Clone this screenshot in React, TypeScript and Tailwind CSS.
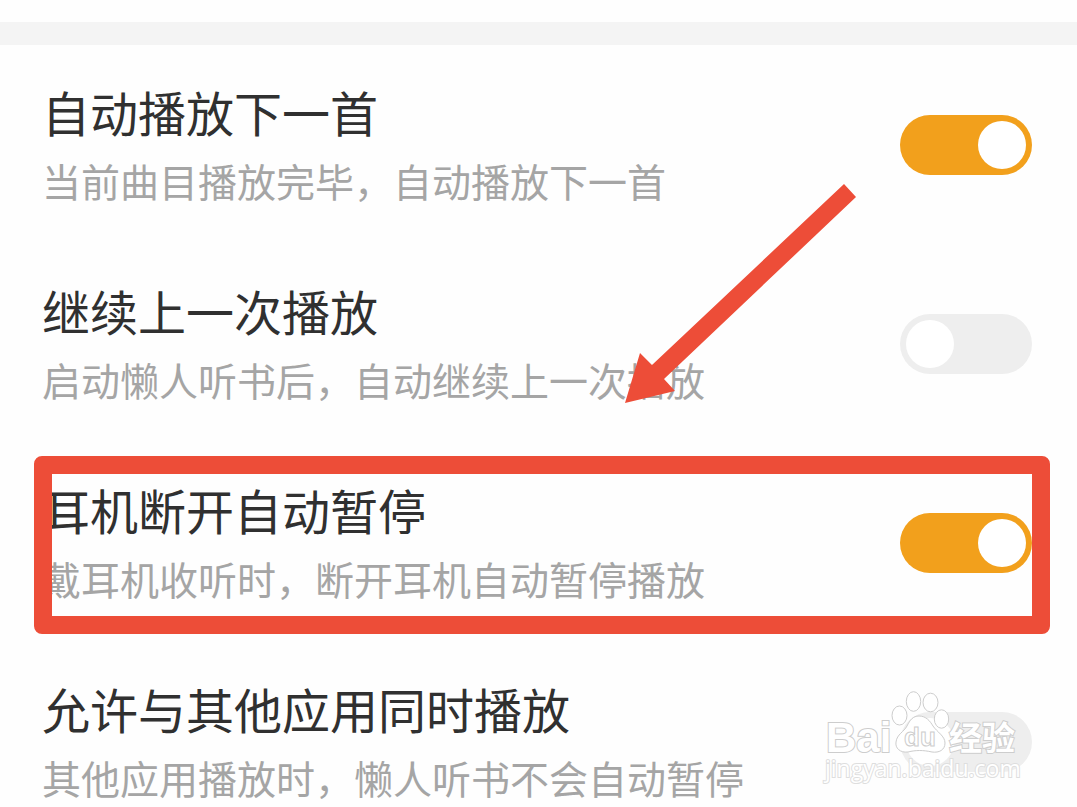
import React, { useState } from 'react';

interface Setting {
  id: string;
  title: string;
  description: string;
  enabled: boolean;
  highlighted?: boolean;
}

const initialSettings: Setting[] = [
  {
    id: 'auto-next',
    title: '自动播放下一首',
    description: '当前曲目播放完毕，自动播放下一首',
    enabled: true,
  },
  {
    id: 'resume-last',
    title: '继续上一次播放',
    description: '启动懒人听书后，自动继续上一次播放',
    enabled: false,
  },
  {
    id: 'headset-pause',
    title: '耳机断开自动暂停',
    description: '戴耳机收听时，断开耳机自动暂停播放',
    enabled: true,
    highlighted: true,
  },
  {
    id: 'mix-audio',
    title: '允许与其他应用同时播放',
    description: '其他应用播放时，懒人听书不会自动暂停',
    enabled: false,
  },
];

interface SettingRowProps {
  setting: Setting;
  onToggle: (id: string) => void;
}

const SettingRow: React.FC<SettingRowProps> = ({ setting, onToggle }) => (
  <li className="relative flex items-center justify-between pl-[42px] pr-[45px] py-[30px]">
    <label htmlFor={setting.id} className="flex flex-col whitespace-nowrap">
      <span className="text-[48px] leading-[72px] text-[#303030]">{setting.title}</span>
      <span className="text-[39px] leading-[67px] text-[#a5a5a5]">{setting.description}</span>
    </label>
    <input
      id={setting.id}
      type="checkbox"
      role="switch"
      checked={setting.enabled}
      onChange={() => onToggle(setting.id)}
      className="relative h-[60px] w-[132px] shrink-0 cursor-pointer appearance-none rounded-full bg-[#eeeeee] transition-colors before:absolute before:left-[6px] before:top-[6px] before:size-12 before:rounded-full before:bg-white before:content-[''] checked:bg-[#f2a01c] checked:before:left-[78px]"
    />
    {setting.highlighted && (
      <div className="pointer-events-none absolute bottom-2 left-[34px] right-[27px] top-[13px] rounded-lg border-[18px] border-[#ed4d38]" />
    )}
  </li>
);

const Arrow: React.FC = () => (
  <svg
    className="pointer-events-none absolute right-[220px] top-[184px] z-10"
    width="232"
    height="220"
    viewBox="0 0 232 220"
    aria-hidden="true"
  >
    <path d="M0 219L15 169L27 181L219 0L231 13L39 195L50 207Z" fill="#ed4d38" />
  </svg>
);

const Watermark: React.FC = () => (
  <svg
    className="pointer-events-none absolute bottom-[17px] right-[47px] z-10"
    width="210"
    height="104"
    viewBox="0 0 210 104"
    fill="white"
    stroke="#cdcdcd"
    strokeWidth="1"
  >
    <g paintOrder="stroke" strokeWidth="2">
      <text x="6" y="66" fontSize="42" fontFamily="Liberation Sans, sans-serif" fontWeight="700">
        Bai
      </text>
      <text x="129" y="64" fontSize="33" fontFamily="Noto Sans CJK SC, sans-serif" fontWeight="700">
        经验
      </text>
    </g>
    <ellipse cx="79.500" cy="29.500" rx="7.500" ry="9.500" />
    <ellipse cx="93.500" cy="15.500" rx="7.200" ry="9.800" />
    <ellipse cx="110.500" cy="16.500" rx="7.500" ry="9.300" />
    <ellipse cx="121.500" cy="33" rx="7.200" ry="9.200" />
    <path d="M99 30C106 30 110 35 113 40C117 46 125 50 125 57C125 64 119 67 112 66C103 64 96 64 88 66C80 67 75 62 76 56C77 48 84 46 87 40C90 34 93 30 99 30Z" />
    <text x="84" y="60" fontSize="26" fontFamily="Liberation Sans, sans-serif" fontWeight="700">
      du
    </text>
    <text
      x="5"
      y="91"
      fontSize="23"
      fontFamily="Open Sans, sans-serif"
      strokeWidth="2"
      stroke="#dedede"
      paintOrder="stroke"
    >
      jingyan.baidu.com
    </text>
  </svg>
);

export default function App() {
  const [settings, setSettings] = useState<Setting[]>(initialSettings);

  const handleToggle = (id: string) => {
    setSettings((prev) => prev.map((s) => (s.id === id ? { ...s, enabled: !s.enabled } : s)));
  };

  return (
    <main className="relative h-screen overflow-hidden bg-[#fefefe] pt-[22px] font-['Noto_Sans_CJK_SC',sans-serif]">
      <div className="h-[23px] bg-[#f4f4f4]" />
      <ul>
        {settings.map((setting) => (
          <SettingRow key={setting.id} setting={setting} onToggle={handleToggle} />
        ))}
      </ul>
      <Arrow />
      <Watermark />
    </main>
  );
}
